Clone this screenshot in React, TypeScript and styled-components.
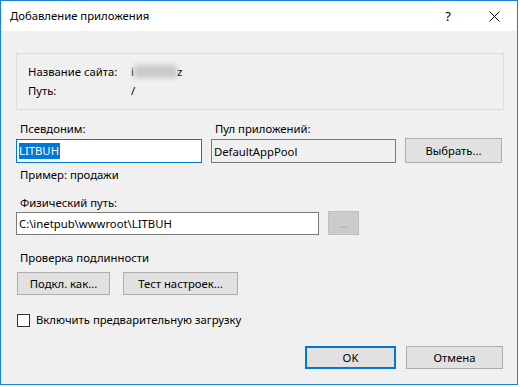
import React from "react";
import styled, { createGlobalStyle, css } from "styled-components";

const GlobalStyle = createGlobalStyle`
  html, body {
    margin: 0;
    padding: 0;
    background: #fff;
  }
  body {
    font-family: "Noto Sans", "Open Sans", sans-serif;
    font-size: 11.3px;
    color: #000;
  }
`;

const Window = styled.div`
  width: 518px;
  height: 385px;
  box-sizing: border-box;
  border: 1px solid #1a7fd6;
  display: flex;
  flex-direction: column;
  background: #f0f0f0;
`;

const TitleBar = styled.div`
  height: 30px;
  background: #fff;
  display: flex;
  align-items: center;
  padding-left: 9px;
  flex-shrink: 0;
`;

const Title = styled.div`
  flex: 1;
  line-height: 16px;
  margin-top: -1px;
`;

const TitleButton = styled.div`
  width: 46px;
  height: 30px;
  display: flex;
  align-items: center;
  justify-content: center;
  font-size: 13px;
  &:first-of-type {
    padding-left: 3px;
  }
`;

const Body = styled.div`
  flex: 1;
  padding: 22px 13px 15px 15px;
  display: flex;
  flex-direction: column;
`;

const GroupBox = styled.div`
  border: 1px solid #dcdcdc;
  padding: 10px 0 10px 11px;
  display: grid;
  grid-template-columns: 103px 1fr;
  row-gap: 3px;
  line-height: 16px;
`;

const Blurred = styled.span`
  display: inline-block;
  width: 43px;
  height: 13px;
  vertical-align: -2px;
  background: #c9c9c9;
  filter: blur(2.5px);
`;

const Label = styled.div<{ $mt?: number }>`
  line-height: 16px;
  padding-left: 4px;
  margin-top: ${({ $mt }) => $mt ?? 0}px;
`;

const FieldRow = styled.div<{ $mt?: number }>`
  display: flex;
  align-items: flex-end;
  gap: 9px;
  margin-top: ${({ $mt }) => $mt ?? 0}px;
`;

const Column = styled.div<{ $w: number }>`
  width: ${({ $w }) => $w}px;
  display: flex;
  flex-direction: column;
  gap: 2px;
`;

const Input = styled.div<{ $focused?: boolean; $readOnly?: boolean; $w?: number; $h?: number }>`
  box-sizing: border-box;
  width: ${({ $w }) => ($w ? `${$w}px` : "100%")};
  height: ${({ $h }) => $h ?? 24}px;
  border: 1px solid #7a7a7a;
  background: #fff;
  display: flex;
  align-items: center;
  padding-left: 2px;
  white-space: nowrap;
  ${({ $readOnly }) =>
    $readOnly &&
    css`
      background: #f0f0f0;
    `}
  ${({ $focused }) =>
    $focused &&
    css`
      border-color: #0078d7;
    `}
`;

const Selected = styled.span`
  background: #0078d7;
  color: #fff;
  line-height: 16px;
  padding-right: 1px;
`;

const Button = styled.button<{ $w: number; $h?: number; $default?: boolean; $disabled?: boolean }>`
  box-sizing: border-box;
  width: ${({ $w }) => $w}px;
  height: ${({ $h }) => $h ?? 23}px;
  font-family: inherit;
  font-size: 11.3px;
  color: #000;
  background: #e1e1e1;
  border: 1px solid #adadad;
  padding: 0;
  flex-shrink: 0;
  ${({ $default }) =>
    $default &&
    css`
      border: 2px solid #0078d7;
    `}
  ${({ $disabled }) =>
    $disabled &&
    css`
      background: #cccccc;
      border-color: #bfbfbf;
      color: #a0a0a0;
    `}
`;

const ButtonRow = styled.div<{ $mt: number; $end?: boolean }>`
  display: flex;
  gap: ${({ $end }) => ($end ? 10 : 13)}px;
  margin-top: ${({ $mt }) => $mt}px;
  padding-left: 1px;
  justify-content: ${({ $end }) => ($end ? "flex-end" : "flex-start")};
  padding-right: ${({ $end }) => ($end ? 1 : 0)}px;
`;

const CheckRow = styled.label`
  display: flex;
  align-items: center;
  gap: 6px;
  margin-top: 17px;
  line-height: 16px;
  padding-left: 1px;
`;

const CheckBox = styled.span`
  box-sizing: border-box;
  width: 13px;
  height: 13px;
  border: 1px solid #333;
  background: #fff;
`;

const Spacer = styled.div`
  flex: 1;
`;

export default function App() {
  return (
    <>
      <GlobalStyle />
      <Window>
        <TitleBar>
          <Title>Добавление приложения</Title>
          <TitleButton>?</TitleButton>
          <TitleButton>
            <svg width="11" height="11" viewBox="0 0 11 11">
              <path d="M0.5 0.5L10.5 10.5M10.5 0.5L0.5 10.5" stroke="#000" strokeWidth="1" />
            </svg>
          </TitleButton>
        </TitleBar>
        <Body>
          <GroupBox>
            <span>Название сайта:</span>
            <span>
              i<Blurred />z
            </span>
            <span>Путь:</span>
            <span>/</span>
          </GroupBox>

          <FieldRow $mt={11}>
            <Column $w={186}>
              <Label>Псевдоним:</Label>
              <Input $focused>
                <Selected>LITBUH</Selected>
              </Input>
            </Column>
            <Column $w={185}>
              <Label>Пул приложений:</Label>
              <Input $readOnly>DefaultAppPool</Input>
            </Column>
            <Button $w={97} $h={25}>Выбрать...</Button>
          </FieldRow>

          <Label $mt={4}>Пример: продажи</Label>

          <Label $mt={12}>Физический путь:</Label>
          <FieldRow $mt={0}>
            <Input $w={303} $h={23}>C:\inetpub\wwwroot\LITBUH</Input>
            <Button $w={31} $h={24} $disabled>
              ...
            </Button>
          </FieldRow>

          <Label $mt={15}>Проверка подлинности</Label>
          <ButtonRow $mt={6}>
            <Button $w={93}>Подкл. как...</Button>
            <Button $w={115}>Тест настроек...</Button>
          </ButtonRow>

          <CheckRow>
            <CheckBox />
            Включить предварительную загрузку
          </CheckRow>

          <Spacer />
          <ButtonRow $mt={0} $end>
            <Button $w={91} $default>
              OK
            </Button>
            <Button $w={97}>Отмена</Button>
          </ButtonRow>
        </Body>
      </Window>
    </>
  );
}
